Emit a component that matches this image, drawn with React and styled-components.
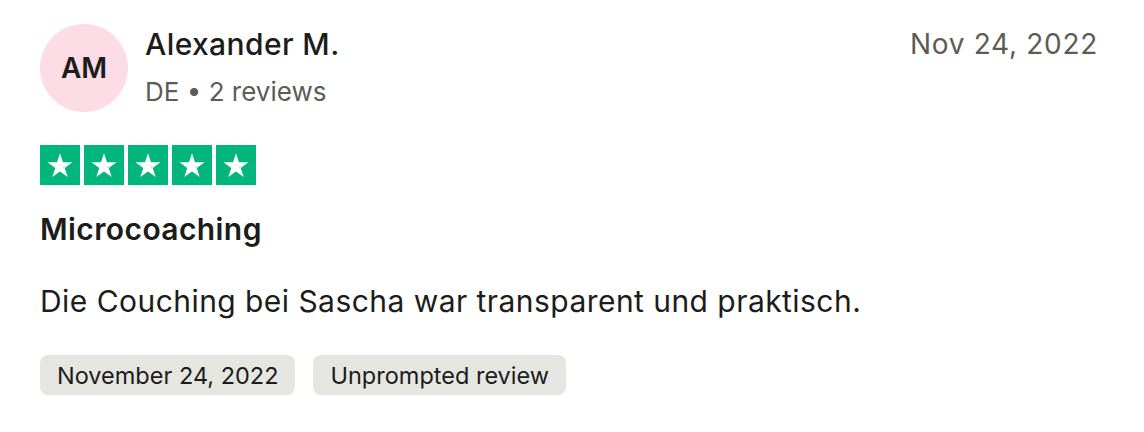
import React from "react";
import styled, { createGlobalStyle } from "styled-components";

const colors = {
  text: "#1c1c1a",
  muted: "#5c5c56",
  star: "#00b67a",
  chip: "#e5e5e1",
  avatar: "#fddde5",
};

const GlobalStyle = createGlobalStyle`
  body {
    margin: 0;
    background: #fff;
    font-family: Inter, "Noto Sans", sans-serif;
    color: ${colors.text};
  }
`;

const Card = styled.article`
  width: 1144px;
  height: 432px;
  box-sizing: border-box;
  padding: 24px 46px 0 40px;
  display: flex;
  flex-direction: column;
`;

const Header = styled.header`
  display: flex;
  align-items: flex-start;
  gap: 17px;
`;

const Avatar = styled.div`
  width: 88px;
  height: 88px;
  border-radius: 50%;
  background: ${colors.avatar};
  display: flex;
  align-items: center;
  justify-content: center;
  font-size: 28px;
  font-weight: 600;
  flex-shrink: 0;
`;

const Who = styled.div`
  flex: 1;
  display: flex;
  flex-direction: column;
  padding-top: 2px;
`;

const Name = styled.div`
  font-size: 30px;
  font-weight: 500;
  letter-spacing: 0.4px;
  line-height: 36px;
`;

const Meta = styled.div`
  font-size: 26px;
  line-height: 36px;
  margin-top: 12px;
  color: ${colors.muted};
`;

const Date = styled.time`
  font-size: 28px;
  letter-spacing: 0.7px;
  line-height: 36px;
  color: ${colors.muted};
  padding-top: 2px;
`;

const Stars = styled.div`
  display: flex;
  gap: 4px;
  margin-top: 33px;
`;

const StarBox = styled.div`
  width: 40px;
  height: 40px;
  background: ${colors.star};
  display: flex;
  align-items: center;
  justify-content: center;
`;

const Title = styled.h2`
  margin: 24px 0 0;
  font-size: 30px;
  font-weight: 600;
  letter-spacing: 0.4px;
  line-height: 40px;
`;

const Body = styled.p`
  margin: 32px 0 0;
  font-size: 30px;
  letter-spacing: 0.45px;
  line-height: 40px;
`;

const Tags = styled.div`
  display: flex;
  gap: 18px;
  margin-top: 34px;
`;

const Tag = styled.span`
  height: 40px;
  padding: 0 17px;
  border-radius: 8px;
  background: ${colors.chip};
  display: inline-flex;
  align-items: center;
  font-size: 23.5px;
`;

function Star() {
  return (
    <StarBox>
      <svg width="30" height="30" viewBox="0 0 24 24">
        <path
          d="M12 2.5l2.4 7.3H22l-6.2 4.5 2.4 7.3L12 17.1l-6.2 4.5 2.4-7.3L2 9.8h7.6z"
          fill="#fff"
        />
        <path d="M14.4 14.3l1.4 0.1 -0.7-2.2z" fill={colors.star} opacity="0.35" />
      </svg>
    </StarBox>
  );
}

export default function App() {
  return (
    <>
      <GlobalStyle />
      <Card>
        <Header>
          <Avatar>AM</Avatar>
          <Who>
            <Name>Alexander M.</Name>
            <Meta>DE • 2 reviews</Meta>
          </Who>
          <Date>Nov 24, 2022</Date>
        </Header>
        <Stars>
          {[0, 1, 2, 3, 4].map((i) => (
            <Star key={i} />
          ))}
        </Stars>
        <Title>Microcoaching</Title>
        <Body>Die Couching bei Sascha war transparent und praktisch.</Body>
        <Tags>
          <Tag>November 24, 2022</Tag>
          <Tag>Unprompted review</Tag>
        </Tags>
      </Card>
    </>
  );
}
